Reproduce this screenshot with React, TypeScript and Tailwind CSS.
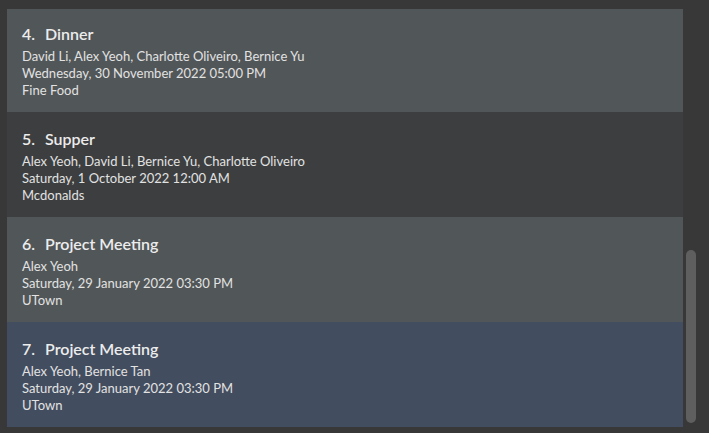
const meetings = [
  {
    id: 4,
    title: 'Dinner',
    people: 'David Li, Alex Yeoh, Charlotte Oliveiro, Bernice Yu',
    date: 'Wednesday, 30 November 2022 05:00 PM',
    place: 'Fine Food',
  },
  {
    id: 5,
    title: 'Supper',
    people: 'Alex Yeoh, David Li, Bernice Yu, Charlotte Oliveiro',
    date: 'Saturday, 1 October 2022 12:00 AM',
    place: 'Mcdonalds',
  },
  {
    id: 6,
    title: 'Project Meeting',
    people: 'Alex Yeoh',
    date: 'Saturday, 29 January 2022 03:30 PM',
    place: 'UTown',
  },
  {
    id: 7,
    title: 'Project Meeting',
    people: 'Alex Yeoh, Bernice Tan',
    date: 'Saturday, 29 January 2022 03:30 PM',
    place: 'UTown',
  },
];

const cellBg = ['bg-[#515658]', 'bg-[#3c3e3f]', 'bg-[#515658]', 'bg-[#424d5f]'];

export default function App() {
  return (
    <div className="flex h-[433px] w-[709px] overflow-hidden bg-[#383838] font-['Lato',sans-serif]">
      <div className="flex w-[683px] flex-col pl-[7px] pt-[9px]">
        {meetings.map((m, idx) => (
          <div
            key={m.id}
            className={`${cellBg[idx]} ${idx === 0 ? 'h-[103px] pt-[15px]' : 'h-[105px] pt-[17px]'} pl-[15px] text-[#e2e2e2]`}
          >
            <div className="flex text-[16px] leading-[20px] font-semibold text-[#ececec]">
              <span className="w-[23px]">{m.id}.</span>
              <span>{m.title}</span>
            </div>
            <div className="mt-[4px] text-[13px] leading-[17px]">
              <div>{m.people}</div>
              <div>{m.date}</div>
              <div>{m.place}</div>
            </div>
          </div>
        ))}
      </div>
      <div className="flex w-[26px] flex-col pl-[3px] pt-[250px]">
        <div className="h-[173px] w-[10px] rounded-[5px] bg-[#5f5f5f]" />
      </div>
    </div>
  );
}
